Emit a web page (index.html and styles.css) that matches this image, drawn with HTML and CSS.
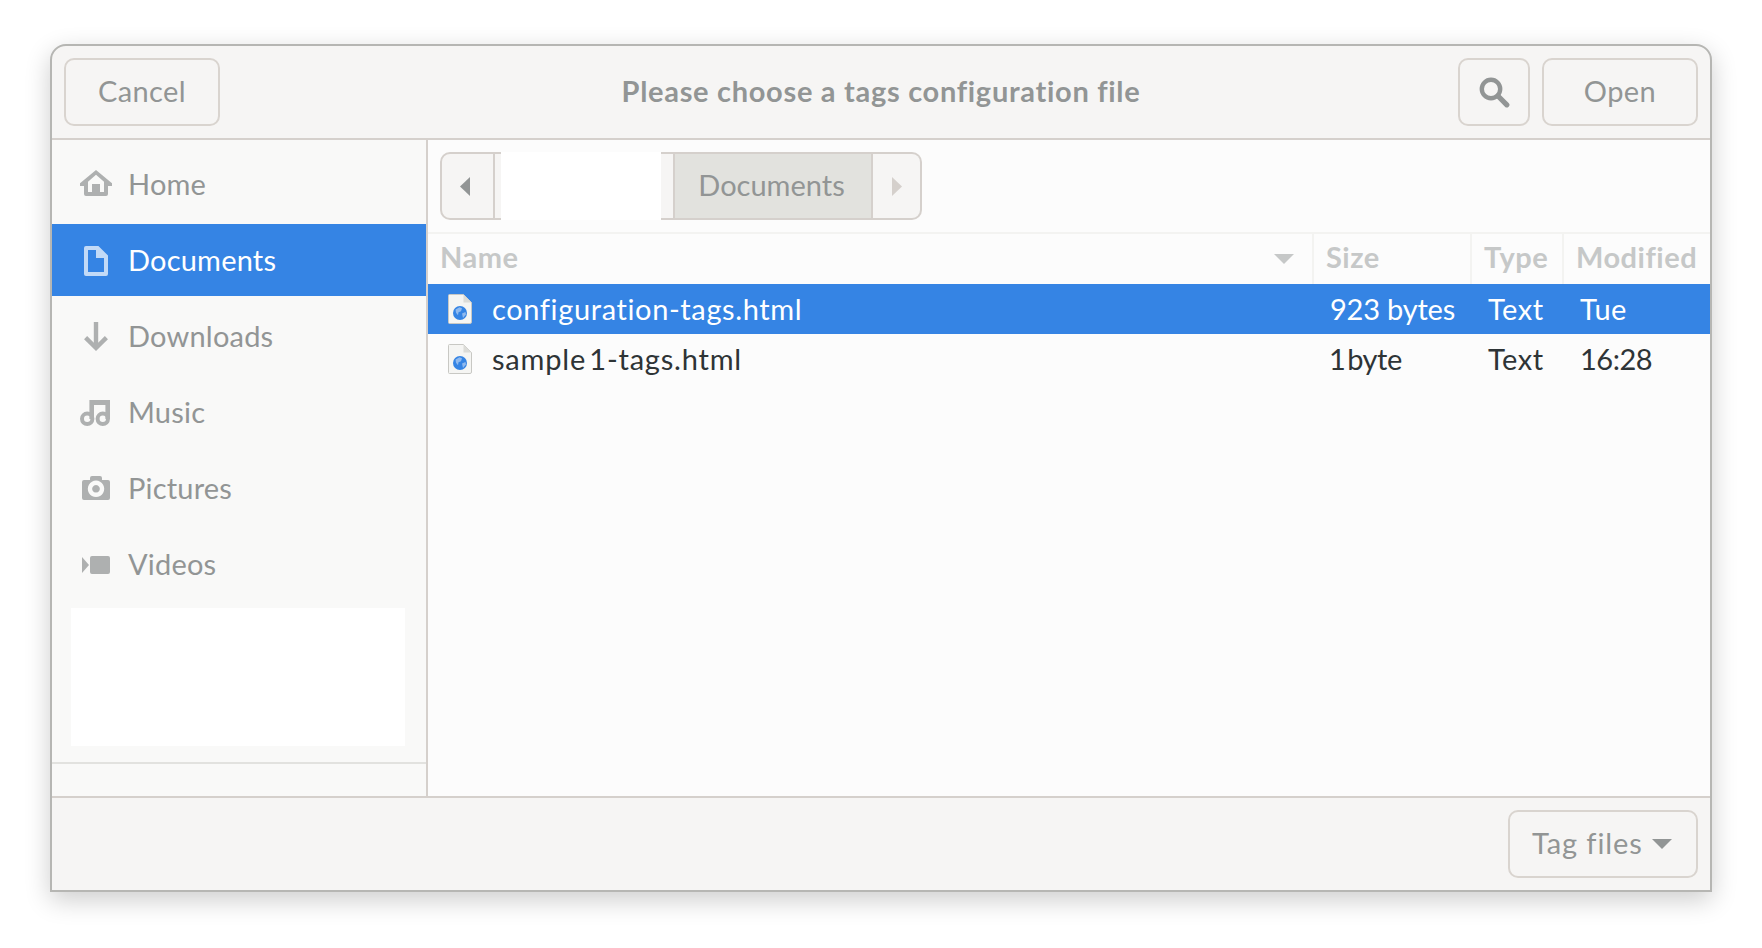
FILE: index.html
```html
<!DOCTYPE html>
<html lang="en">
<head>
    <meta charset="UTF-8" />
    <title>Please choose a tags configuration file</title>
    <link rel="stylesheet" href="styles.css">
</head>
<body>
    <div class="dialog">
        <header class="headerbar">
            <div class="headerbar-start">
                <button class="btn btn-text">Cancel</button>
            </div>
            <h1 class="title">Please choose a tags configuration file</h1>
            <div class="headerbar-end">
                <button class="btn btn-search" aria-label="Search">
                    <svg class="icon" viewBox="0 0 16 16"><circle cx="6.5" cy="6.5" r="4.6" fill="none" stroke="#929595" stroke-width="2.2"/><path d="M10 10l4.400 4.400" fill="none" stroke="#929595" stroke-width="2.600" stroke-linecap="round"/></svg>
                </button>
                <button class="btn btn-text">Open</button>
            </div>
        </header>

        <div class="body">
            <aside class="sidebar">
                <nav class="places">
                    <a class="place">
                        <svg class="icon" viewBox="0 0 16 16"><path fill="#aeb0b0" fill-rule="evenodd" d="M8 1L0 7.600V9h2v4a1 1 0 0 0 1 1h10a1 1 0 0 0 1-1V9h2V7.600zM8 3.400l4 3.500V12h-2V8H6v4H4V6.900z"/></svg>
                        <span>Home</span>
                    </a>
                    <a class="place selected">
                        <svg class="icon" viewBox="0 0 16 16"><path fill="#fff" fill-opacity=".7" fill-rule="evenodd" d="M3 1h6.200L14 5.800V15a1 1 0 0 1-1 1H3a1 1 0 0 1-1-1V2a1 1 0 0 1 1-1zM4 3v11h8V7H8V3z"/></svg>
                        <span>Documents</span>
                    </a>
                    <a class="place">
                        <svg class="icon" viewBox="0 0 16 16"><path fill="none" stroke="#aeb0b0" stroke-width="2.200" d="M8 1v13M2.800 8.800L8 14l5.200-5.200"/></svg>
                        <span>Downloads</span>
                    </a>
                    <a class="place">
                        <svg class="icon" viewBox="0 0 16 16">
                            <circle cx="3.600" cy="11.400" r="2.600" fill="none" stroke="#aeb0b0" stroke-width="2"/>
                            <circle cx="11.400" cy="11.400" r="2.600" fill="none" stroke="#aeb0b0" stroke-width="2"/>
                            <path fill="#aeb0b0" d="M4.700 2H15v9.500h-2.300V4.500H7v7H4.700z"/>
                        </svg>
                        <span>Music</span>
                    </a>
                    <a class="place">
                        <svg class="icon" viewBox="0 0 16 16"><path fill="#aeb0b0" fill-rule="evenodd" d="M6 2h4a1 1 0 0 1 1 1v1h3a1 1 0 0 1 1 1v8a1 1 0 0 1-1 1H2a1 1 0 0 1-1-1V5a1 1 0 0 1 1-1h3V3a1 1 0 0 1 1-1zM8 4.300a4.100 4.100 0 1 0 .01 0zM8 6.500a1.900 1.900 0 1 1-.01 0z"/></svg>
                        <span>Pictures</span>
                    </a>
                    <a class="place">
                        <svg class="icon" viewBox="0 0 16 16"><path fill="#aeb0b0" d="M1 4.500l3.500 4-3.500 4zM6 4h8a1 1 0 0 1 1 1v7a1 1 0 0 1-1 1H6a1 1 0 0 1-1-1V5a1 1 0 0 1 1-1z"/></svg>
                        <span>Videos</span>
                    </a>
                </nav>
                <div class="blank"></div>
                <div class="sidebar-sep"></div>
            </aside>

            <main class="content">
                <div class="pathbar-wrap">
                    <div class="pathbar">
                        <button class="seg seg-arrow" aria-label="Back">
                            <svg class="arrow" viewBox="0 0 10 19"><path fill="#929595" d="M10 0v19L0 9.500z"/></svg>
                        </button>
                        <div class="seg seg-hidden"><div class="seg-blank"></div></div>
                        <div class="seg seg-current">Documents</div>
                        <button class="seg seg-last" aria-label="Forward">
                            <svg class="arrow" viewBox="0 0 10 19"><path fill="#d5d0cc" d="M0 0v19l10-9.500z"/></svg>
                        </button>
                    </div>
                </div>

                <div class="files">
                    <div class="columns">
                        <div class="col col-name"><span>Name</span><svg class="sort" viewBox="0 0 20 10"><path fill="#c6c8c8" d="M0 0h20L10 10z"/></svg></div>
                        <div class="col">Size</div>
                        <div class="col">Type</div>
                        <div class="col">Modified</div>
                    </div>

                    <div class="row selected">
                        <div class="cell cell-name">
                            <svg class="file-icon" viewBox="0 0 24 30">
                                <path fill="#f5f5f3" stroke="#c8c8c4" d="M1.500.5h14l8 8V28a1.500 1.500 0 0 1-1.500 1.500H1.500a1 1 0 0 1-1-1V1.500a1 1 0 0 1 1-1z"/>
                                <path fill="#dcdcd8" d="M15.500.5l8 8h-8z"/>
                                <circle cx="12" cy="19" r="7" fill="#3584e4"/>
                                <path fill="#8fb9ee" d="M7.500 15.500l4-2.200 2.500 1-1 3-2.500 1-.5 3-2-2.500zM14 19.500l3.500-1.500.5 2.500-3 3.500z"/>
                            </svg>
                            <span class="filename">configuration-tags.html</span>
                        </div>
                        <div class="cell cell-size">923 bytes</div>
                        <div class="cell cell-type">Text</div>
                        <div class="cell cell-mod">Tue</div>
                    </div>
                    <div class="row">
                        <div class="cell cell-name">
                            <svg class="file-icon" viewBox="0 0 24 30">
                                <path fill="#f5f5f3" stroke="#c8c8c4" d="M1.500.5h14l8 8V28a1.500 1.500 0 0 1-1.500 1.500H1.500a1 1 0 0 1-1-1V1.500a1 1 0 0 1 1-1z"/>
                                <path fill="#dcdcd8" d="M15.500.5l8 8h-8z"/>
                                <circle cx="12" cy="19" r="7" fill="#3584e4"/>
                                <path fill="#8fb9ee" d="M7.500 15.500l4-2.200 2.500 1-1 3-2.500 1-.5 3-2-2.500zM14 19.500l3.500-1.500.5 2.500-3 3.500z"/>
                            </svg>
                            <span class="filename narrow-one">sample 1-tags.html</span>
                        </div>
                        <div class="cell cell-size narrow-one">1 byte</div>
                        <div class="cell cell-type">Text</div>
                        <div class="cell cell-mod">16:28</div>
                    </div>
                </div>
            </main>
        </div>

        <footer class="footer">
            <button class="btn btn-filter"><span>Tag files</span><svg class="caret" viewBox="0 0 20 10"><path fill="#929595" d="M0 0h20L10 10z"/></svg></button>
        </footer>
    </div>
</body>
</html>
```

FILE: styles.css
```css
/* General */
* {
    box-sizing: border-box;
}

html, body {
    height: 100%;
}

body {
    margin: 0;
    padding: 44px 50px 56px 50px;
    background-color: #fff;
    font-family: Lato, "Noto Sans", sans-serif;
    font-size: 29px;
    overflow: hidden;
}

/* Dialog window */
.dialog {
    display: flex;
    flex-direction: column;
    width: 1662px;
    height: 848px;
    border: 2px solid #b6b6b3;
    border-radius: 16px 16px 0 0;
    background-color: #f6f5f4;
    box-shadow: 0 8px 26px rgba(0,0,0,0.2);
    overflow: hidden;
}

/* Buttons */
.btn {
    height: 68px;
    border: 2px solid #d9d4cf;
    border-radius: 10px;
    background-color: #f6f5f4;
    color: #929595;
    font: inherit;
    padding: 0 0 3px 0;
}

.btn-text {
    width: 156px;
    letter-spacing: 0.4px;
}

.btn-search {
    width: 72px;
    padding: 0;
    display: flex;
    align-items: center;
    justify-content: center;
}

.btn-filter {
    width: 190px;
    display: flex;
    align-items: center;
    gap: 9px;
    padding-left: 22px;
    letter-spacing: 0.9px;
}

/* Header bar */
.headerbar {
    display: grid;
    grid-template-columns: 1fr auto 1fr;
    align-items: center;
    height: 94px;
    padding: 12px;
    border-bottom: 2px solid #d5d0cc;
    flex: none;
}

.headerbar-end {
    display: flex;
    justify-content: flex-end;
    gap: 12px;
}

.title {
    margin: 0;
    padding-bottom: 3px;
    font-size: 29px;
    font-weight: 700;
    letter-spacing: 0.7px;
    color: #929595;
}

.icon {
    width: 32px;
    height: 32px;
    flex: none;
}

/* Body */
.body {
    display: flex;
    flex: 1;
    min-height: 0;
}

/* Sidebar */
.sidebar {
    width: 376px;
    flex: none;
    display: flex;
    flex-direction: column;
    background-color: #f9f9f8;
    border-right: 2px solid #d5d0cc;
}

.places {
    display: flex;
    flex-direction: column;
    gap: 4px;
    padding-top: 8px;
}

.place {
    display: flex;
    align-items: center;
    gap: 16px;
    height: 72px;
    padding-left: 28px;
    color: #929595;
    letter-spacing: 0.2px;
}

.place span {
    padding-bottom: 2px;
}

.place.selected {
    background-color: #3584e4;
    color: #fff;
}

.blank {
    height: 138px;
    margin: 8px 21px 0 19px;
    background-color: #fff;
}

.sidebar-sep {
    height: 2px;
    margin-top: 16px;
    background-color: #e2e2df;
}

/* Content */
.content {
    flex: 1;
    min-width: 0;
    display: flex;
    flex-direction: column;
    background-color: #fcfcfc;
}

.pathbar-wrap {
    height: 94px;
    padding: 12px 12px 0 12px;
    border-bottom: 2px solid #f3f3f1;
    flex: none;
}

.pathbar {
    display: flex;
    width: 482px;
    height: 68px;
}

.seg {
    display: flex;
    align-items: center;
    justify-content: center;
    height: 68px;
    padding: 0;
    border: 2px solid #d5d0cc;
    background-color: #f6f5f4;
    color: #929595;
    font: inherit;
}

.seg-arrow {
    width: 55px;
    padding-right: 6px;
    border-radius: 10px 0 0 10px;
}

.seg-last {
    width: 49px;
    border-left: 0;
    border-radius: 0 10px 10px 0;
}

.seg-hidden {
    width: 178px;
    border-left: 0;
    border-right: 0;
    justify-content: flex-start;
    padding-left: 6px;
}

.seg-blank {
    width: 160px;
    height: 68px;
    background-color: #fff;
}

.seg-current {
    width: 200px;
    padding-bottom: 3px;
    padding-right: 3px;
    background-color: #e2e2de;
}

.arrow {
    width: 10px;
    height: 19px;
}

/* File list */
.columns, .row {
    display: grid;
    grid-template-columns: 884px 158px 92px 148px;
}

.columns {
    height: 50px;
    color: #c6c8c8;
    font-weight: 700;
    letter-spacing: 0.5px;
}

.col {
    display: flex;
    align-items: center;
    padding-left: 12px;
    padding-bottom: 5px;
    border-left: 2px solid #f3f3f1;
}

.col-name {
    justify-content: space-between;
    padding-left: 12px;
    padding-right: 18px;
    border-left: 0;
}

.sort {
    width: 20px;
    height: 10px;
    margin-top: 5px;
}

.row {
    height: 50px;
    padding-bottom: 1px;
    color: #2e3436;
    align-items: center;
}

.row.selected {
    background-color: #3584e4;
    color: #fff;
}

.cell-name {
    display: flex;
    align-items: center;
    gap: 20px;
    padding-left: 20px;
}

.filename {
    letter-spacing: 0.62px;
}

.cell-size {
    padding-left: 18px;
    letter-spacing: -0.2px;
}

.cell-type {
    padding-left: 18px;
    letter-spacing: 0.5px;
}

.cell-mod {
    padding-left: 18px;
    letter-spacing: 0.4px;
}

.row:last-child .cell-mod {
    letter-spacing: -0.5px;
}

/* The 1 and the space before it sit closer in the original font */
.narrow-one {
    word-spacing: -5px;
}

.filename.narrow-one {
    letter-spacing: 0.8px;
}

.cell-size.narrow-one {
    padding-left: 17px;
    letter-spacing: -0.5px;
}

.file-icon {
    width: 24px;
    height: 30px;
    flex: none;
}

/* Footer */
.footer {
    display: flex;
    justify-content: flex-end;
    flex: none;
    height: 94px;
    padding: 12px;
    border-top: 2px solid #d5d0cc;
}

.caret {
    width: 20px;
    height: 10px;
    margin-top: 3px;
}
```
